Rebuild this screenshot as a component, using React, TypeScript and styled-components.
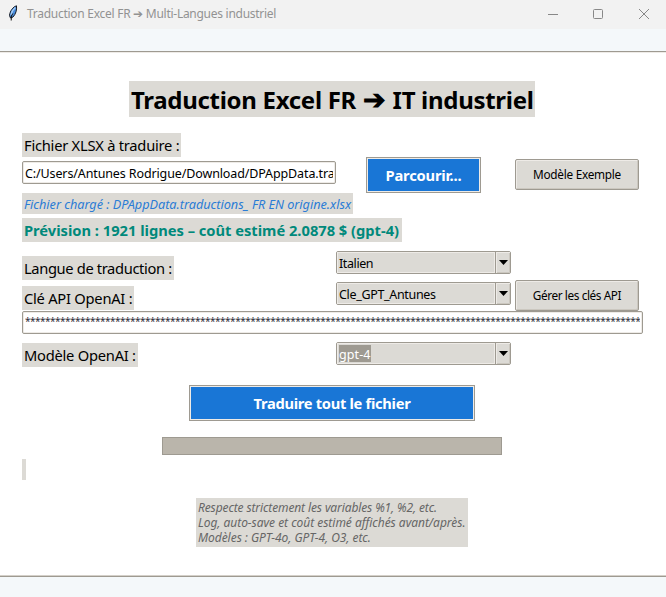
import React from 'react';
import styled, { createGlobalStyle, css } from 'styled-components';

const edge = '#9e9a91';
const light = '#eeebe7';
const face = '#dcdad5';

const GlobalStyle = createGlobalStyle`
  body { margin: 0; background: #fff; }
  *, *::before, *::after { box-sizing: border-box; }
`;

const Window = styled.div`
  width: 666px;
  height: 597px;
  display: flex;
  flex-direction: column;
  overflow: hidden;
  background: #f4f8fa;
  color: #000;
  font-family: 'Noto Sans', 'Open Sans', sans-serif;
  white-space: nowrap;
`;

const TitleBar = styled.header`
  height: 29px;
  flex: none;
  display: flex;
  align-items: center;
  padding: 0 17px 2px 8px;
  background: #f2f2f2;
  color: #929292;
`;

const WindowTitle = styled.span`
  flex: 1;
  margin-left: 8px;
  font-size: 12px;
  letter-spacing: -0.27px;
`;

const Controls = styled.div`
  display: flex;
  gap: 35px;
  svg { display: block; }
  svg:last-child { margin-left: 1px; }
`;

const Body = styled.main`
  height: 526px;
  flex: none;
  margin-top: 22px;
  padding: 28px 22px 0;
  display: flex;
  flex-direction: column;
  align-items: flex-start;
  background: #fff;
  border-top: 1px solid ${edge};
  border-bottom: 1px solid ${edge};
  box-shadow: inset 0 1px ${light}, inset 0 -1px #d4d0c9;
`;

const Heading = styled.h1`
  width: 406px;
  height: 36px;
  margin: 1px 0 0 107px;
  padding-left: 2px;
  background: ${face};
  font-size: 24px;
  line-height: 37px;
  font-weight: 700;
  letter-spacing: -0.3px;
`;

const HeadingArrow = styled.span`
  margin: 0 1px;
  font-size: 27px;
  line-height: 1;
`;

const Label = styled.label<{ $w: number; $ls?: number }>`
  display: block;
  width: ${(p) => p.$w}px;
  height: 24px;
  padding-left: 2px;
  background: ${face};
  font-size: 14.7px;
  line-height: 24px;
  letter-spacing: ${(p) => p.$ls ?? -0.24}px;
`;

const FieldLabel = styled(Label)`
  margin-top: 16px;
`;

const FileRow = styled.div`
  display: grid;
  grid-template-columns: 344px 149px 124px;
  height: 36px;
`;

const Entry = styled.div<{ $w: number; $secret?: boolean }>`
  width: ${(p) => p.$w}px;
  height: 23px;
  flex: none;
  padding: 0 2px;
  border: 1px solid ${edge};
  border-radius: 2px;
  background: #fff;
  box-shadow: inset 0 0 0 1px ${light};
  font-size: 12.5px;
  line-height: 23px;
  letter-spacing: -0.12px;
  ${(p) =>
    p.$secret &&
    css`
      color: #2c2c38;
      font-size: 10px;
      line-height: 19px;
      letter-spacing: -0.507px;
    `}
`;

const EntryText = styled.span`
  display: block;
  overflow: hidden;
`;

const FileEntry = styled(Entry)`
  margin-top: 4px;
`;

const PrimaryButton = styled.button<{ $w: number; $ls: number }>`
  width: ${(p) => p.$w}px;
  height: 36px;
  padding: 0 0 1px;
  border: 1px solid ${edge};
  background: #1976d6;
  box-shadow: inset 0 0 0 1px ${light};
  color: #fff;
  font: 700 14.7px 'Noto Sans', sans-serif;
  letter-spacing: ${(p) => p.$ls}px;
`;

const TranslateButton = styled(PrimaryButton)`
  margin: 18px 0 0 167px;
`;

const Button = styled.button<{ $ls: number }>`
  width: 124px;
  height: 31px;
  padding: 0 0 1px;
  border: 1px solid ${edge};
  border-radius: 2px;
  background: ${face};
  box-shadow: inset 1px 1px ${light}, inset -1px -1px #cbc7bf;
  color: #000;
  font: 11.8px 'Noto Sans', sans-serif;
  letter-spacing: ${(p) => p.$ls}px;
`;

const SampleButton = styled(Button)`
  margin-top: 2px;
`;

const Status = styled.p`
  width: 331px;
  height: 21px;
  margin: 0;
  padding-left: 2px;
  background: ${face};
  color: #2a7cd6;
  font-size: 12.7px;
  font-style: italic;
  line-height: 22px;
  letter-spacing: -0.02px;
`;

const Estimate = styled.p`
  width: 380px;
  height: 24px;
  margin: 4px 0 0;
  padding-left: 2px;
  background: ${face};
  color: #00897b;
  font-size: 14.7px;
  font-weight: 700;
  line-height: 25px;
  letter-spacing: -0.01px;
`;

const OptionRow = styled.div<{ $top: number; $h: number; $labelTop: number }>`
  display: grid;
  grid-template-columns: 314px 179px 124px;
  align-items: start;
  height: ${(p) => p.$h}px;
  margin-top: ${(p) => p.$top}px;
  > label { margin-top: ${(p) => p.$labelTop}px; }
`;

const Combo = styled.div<{ $top?: number; $ls: number }>`
  width: 175px;
  height: 23px;
  margin-top: ${(p) => p.$top ?? 0}px;
  display: grid;
  grid-template-columns: 1fr 14px;
  grid-template-rows: 21px;
  border: 1px solid ${edge};
  border-radius: 2px;
  background: ${face};
  font-size: 12.5px;
  line-height: 23px;
  letter-spacing: ${(p) => p.$ls}px;
`;

const ComboValue = styled.div`
  height: 21px;
  padding-left: 2px;
  border-right: 1px solid ${edge};
  box-shadow: inset 1px 1px ${light}, inset -1px -1px ${light};
`;

const Selection = styled.span`
  display: inline-block;
  height: 17px;
  margin-top: 2px;
  line-height: 19px;
  vertical-align: top;
  background: ${edge};
  color: #fff;
`;

const ComboArrow = styled.div`
  display: flex;
  align-items: center;
  justify-content: center;
  box-shadow: inset 1px 1px ${light}, inset -1px -1px #cbc7bf;
`;

const Progress = styled.div`
  width: 340px;
  height: 18px;
  flex: none;
  margin: 16px 0 0 140px;
  border: 1px solid ${edge};
  background: #bab5ab;
`;

const EmptyLog = styled.div`
  width: 4px;
  height: 21px;
  flex: none;
  margin-top: 4px;
  background: ${face};
`;

const Note = styled.div`
  width: 272px;
  height: 49px;
  margin: 18px 0 0 174px;
  padding: 2px 0 0 2px;
  background: ${face};
  color: #666;
  font-size: 12px;
  font-style: italic;
  line-height: 15px;
`;

const NoteLine = styled.div<{ $ls: number }>`
  letter-spacing: ${(p) => p.$ls}px;
`;

const Feather = () => (
  <svg width="11" height="17" viewBox="0 0 11 17">
    <path d="M8.500 .8C5 2 2 5.800 1.500 10.500L2.500 13L5 12C7.800 9 9 5 8.500 .8Z" fill="#4a8fe0" stroke="#141820" strokeWidth="1" />
    <path d="M7.300 2.500C5 4.500 3.500 7 3 10" fill="none" stroke="#a9d0f8" strokeWidth="1.300" />
    <path d="M4.800 8.500L3.400 11L3.200 15.500" fill="none" stroke="#111" strokeWidth="1" />
  </svg>
);

const Select = ({ value, top, ls, selected }: { value: string; top?: number; ls: number; selected?: boolean }) => (
  <Combo $top={top} $ls={ls}>
    <ComboValue>{selected ? <Selection>{value}</Selection> : value}</ComboValue>
    <ComboArrow>
      <svg width="9" height="5" viewBox="0 0 9 5"><path d="M0 0H9L4.500 5Z" fill="#000" /></svg>
    </ComboArrow>
  </Combo>
);

export default function App() {
  return (
    <Window>
      <GlobalStyle />
      <TitleBar>
        <Feather />
        <WindowTitle>Traduction Excel FR ➔ Multi-Langues industriel</WindowTitle>
        <Controls>
          <svg width="10" height="10" viewBox="0 0 10 10"><path d="M0 5.500H10" stroke="#888" /></svg>
          <svg width="10" height="10" viewBox="0 0 10 10"><rect x=".5" y=".5" width="9" height="9" rx="1" fill="none" stroke="#888" /></svg>
          <svg width="10" height="10" viewBox="0 0 10 10"><path d="M0 0L10 10M10 0L0 10" stroke="#888" /></svg>
        </Controls>
      </TitleBar>
      <Body>
        <Heading>Traduction Excel FR <HeadingArrow>➔</HeadingArrow> IT industriel</Heading>
        <FieldLabel $w={159}>Fichier XLSX à traduire :</FieldLabel>
        <FileRow>
          <FileEntry $w={314}>
            <EntryText>C:/Users/Antunes Rodrigue/Download/DPAppData.traductions</EntryText>
          </FileEntry>
          <PrimaryButton $w={115} $ls={-0.17}>Parcourir...</PrimaryButton>
          <SampleButton $ls={-0.27}>Modèle Exemple</SampleButton>
        </FileRow>
        <Status>Fichier chargé : DPAppData.traductions_ FR EN origine.xlsx</Status>
        <Estimate>Prévision : 1921 lignes – coût estimé 2.0878 $ (gpt-4)</Estimate>
        <OptionRow $top={9} $h={29} $labelTop={5}>
          <Label $w={152} $ls={-0.36}>Langue de traduction :</Label>
          <Select value="Italien" ls={-0.4} />
        </OptionRow>
        <OptionRow $top={0} $h={31} $labelTop={6}>
          <Label $w={112}>Clé API OpenAI :</Label>
          <Select value="Cle_GPT_Antunes" top={2} ls={-0.33} />
          <Button $ls={-0.4}>Gérer les clés API</Button>
        </OptionRow>
        <Entry $w={621} $secret>
          <EntryText>{'*'.repeat(123)}</EntryText>
        </Entry>
        <OptionRow $top={8} $h={25} $labelTop={1}>
          <Label $w={116}>Modèle OpenAI :</Label>
          <Select value="gpt-4" ls={0.1} selected />
        </OptionRow>
        <TranslateButton $w={286} $ls={-0.3}>Traduire tout le fichier</TranslateButton>
        <Progress />
        <EmptyLog />
        <Note>
          <NoteLine $ls={-0.12}>Respecte strictement les variables %1, %2, etc.</NoteLine>
          <NoteLine $ls={-0.03}>Log, auto-save et coût estimé affichés avant/après.</NoteLine>
          <NoteLine $ls={-0.04}>Modèles : GPT-4o, GPT-4, O3, etc.</NoteLine>
        </Note>
      </Body>
    </Window>
  );
}
